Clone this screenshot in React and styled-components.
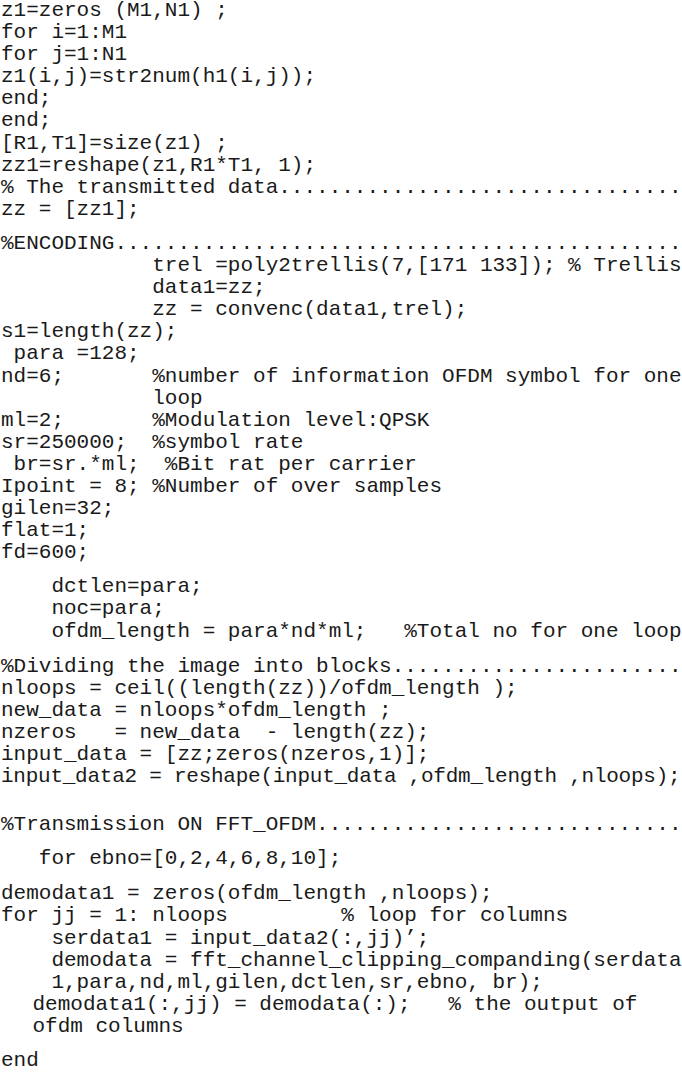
import React from "react";
import styled, { createGlobalStyle } from "styled-components";

const GlobalStyle = createGlobalStyle`
  html, body {
    margin: 0;
    padding: 0;
    background: #ffffff;
  }
`;

// listing
const Listing = styled.div`
  display: flex;
  flex-direction: column;
  width: 682px;
  padding: 0 0 0 1px;
  box-sizing: border-box;
  font-family: "Liberation Mono", "Courier New", monospace;
  font-size: 21px;
  line-height: 22.1px;
  color: #1a1a1a;
  background: #ffffff;
`;

const Block = styled.div`
  display: flex;
  flex-direction: column;
  margin-top: ${({ $space }) => $space || 0}px;
`;

const Line = styled.div`
  white-space: pre;
  padding-left: ${({ $indent }) => ($indent ? `${$indent}ch` : "0")};
  letter-spacing: ${({ $tight }) => ($tight ? "-0.25px" : "0")};
`;

const dots = (n) => ".".repeat(n);

const blocks = [
  {
    space: 0,
    lines: [
      "z1=zeros (M1,N1) ;",
      "for i=1:M1",
      "for j=1:N1",
      "z1(i,j)=str2num(h1(i,j));",
      "end;",
      "end;",
      "[R1,T1]=size(z1) ;",
      "zz1=reshape(z1,R1*T1, 1);",
      "% The transmitted data" + dots(32),
      "zz = [zz1];",
    ],
  },
  {
    space: 12,
    lines: [
      "%ENCODING" + dots(45),
      "            trel =poly2trellis(7,[171 133]); % Trellis",
      "            data1=zz;",
      "            zz = convenc(data1,trel);",
      "s1=length(zz);",
      " para =128;",
      "nd=6;       %number of information OFDM symbol for one",
      "            loop",
      "ml=2;       %Modulation level:QPSK",
      "sr=250000;  %symbol rate",
      " br=sr.*ml;  %Bit rat per carrier",
      "Ipoint = 8; %Number of over samples",
      "gilen=32;",
      "flat=1;",
      "fd=600;",
    ],
  },
  {
    space: 12,
    lines: [
      "    dctlen=para;",
      "    noc=para;",
      "    ofdm_length = para*nd*ml;   %Total no for one loop",
    ],
  },
  {
    space: 13,
    lines: [
      "%Dividing the image into blocks" + dots(23),
      "nloops = ceil((length(zz))/ofdm_length );",
      "new_data = nloops*ofdm_length ;",
      "nzeros   = new_data  - length(zz);",
      "input_data = [zz;zeros(nzeros,1)];",
      { text: "input_data2 = reshape(input_data ,ofdm_length ,nloops);", tight: true },
    ],
  },
  { space: 26, lines: ["%Transmission ON FFT_OFDM" + dots(29)] },
  { space: 12, lines: ["   for ebno=[0,2,4,6,8,10];"] },
  {
    space: 13,
    lines: [
      "demodata1 = zeros(ofdm_length ,nloops);",
      "for jj = 1: nloops         % loop for columns",
      "    serdata1 = input_data2(:,jj)\u2019;",
      "    demodata = fft_channel_clipping_companding(serdata",
      "    1,para,nd,ml,gilen,dctlen,sr,ebno, br);",
      { text: "demodata1(:,jj) = demodata(:);   % the output of", indent: 2.5 },
      { text: "ofdm columns", indent: 2.5 },
    ],
  },
  { space: 12, lines: ["end"] },
];

export default function App() {
  return (
    <>
      <GlobalStyle />
      <Listing>
        {blocks.map((block, b) => (
          <Block key={b} $space={block.space}>
            {block.lines.map((ln, i) =>
              typeof ln === "string" ? (
                <Line key={i}>{ln}</Line>
              ) : (
                <Line key={i} $indent={ln.indent} $tight={ln.tight}>
                  {ln.text}
                </Line>
              )
            )}
          </Block>
        ))}
      </Listing>
    </>
  );
}
